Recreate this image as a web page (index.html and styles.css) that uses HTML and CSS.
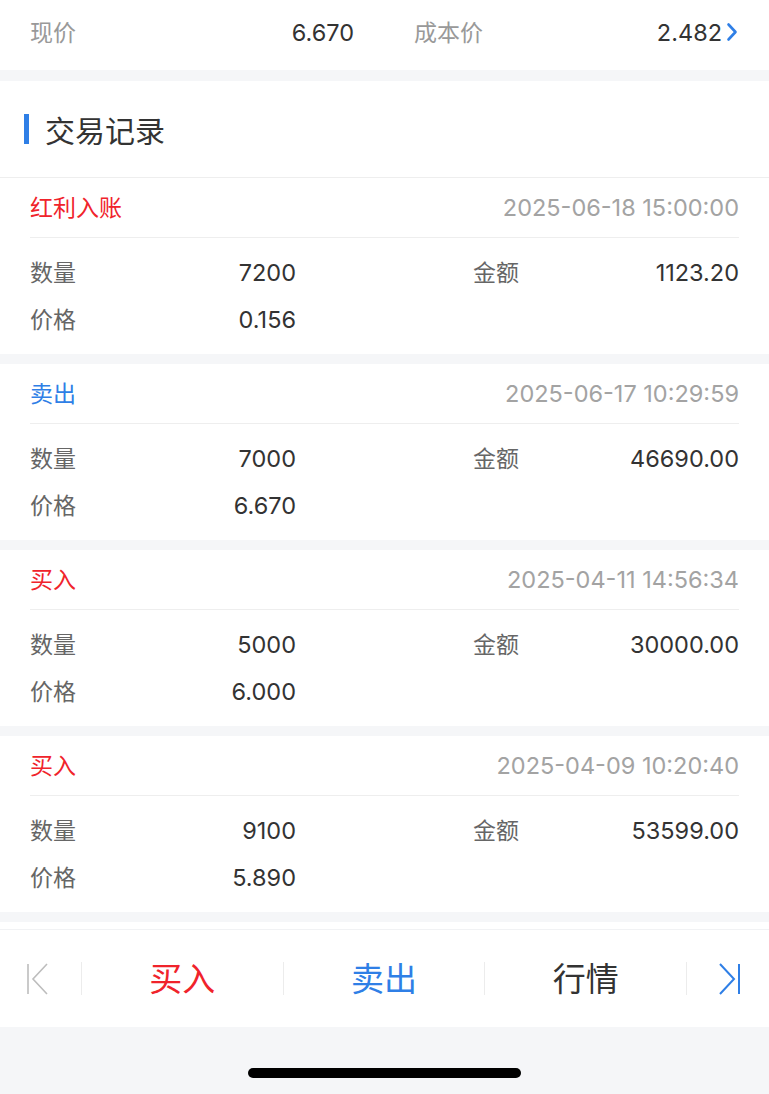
FILE: index.html
```html
<!DOCTYPE html>
<html lang="zh">
<head>
<meta charset="utf-8">
<title>交易记录</title>
<link rel="stylesheet" href="styles.css">
</head>
<body>
<div class="page">
  <div class="summary">
    <div class="pair">
      <span class="s-label">现价</span>
      <span class="s-value">6.670</span>
    </div>
    <div class="pair">
      <span class="s-label">成本价</span>
      <span class="s-value with-arrow">2.482
        <svg class="chev" width="12" height="20" viewBox="0 0 12 20"><path d="M2.5 2.5 L9.5 10 L2.5 17.5" fill="none" stroke="#2f7fe6" stroke-width="2.6" stroke-linecap="round" stroke-linejoin="round"/></svg>
      </span>
    </div>
  </div>

  <div class="section-head">
    <span class="bar"></span>
    <h2 class="title">交易记录</h2>
  </div>

  <div class="records">
    <div class="record">
      <div class="rec-head"><span class="type red">红利入账</span><span class="time">2025-06-18 15:00:00</span></div>
      <div class="rec-body">
        <div class="rec-row">
          <div class="cell"><span class="label">数量</span><span class="value">7200</span></div>
          <div class="cell"><span class="label">金额</span><span class="value">1123.20</span></div>
        </div>
        <div class="rec-row">
          <div class="cell"><span class="label">价格</span><span class="value">0.156</span></div>
        </div>
      </div>
    </div>

    <div class="record">
      <div class="rec-head"><span class="type blue">卖出</span><span class="time">2025-06-17 10:29:59</span></div>
      <div class="rec-body">
        <div class="rec-row">
          <div class="cell"><span class="label">数量</span><span class="value">7000</span></div>
          <div class="cell"><span class="label">金额</span><span class="value">46690.00</span></div>
        </div>
        <div class="rec-row">
          <div class="cell"><span class="label">价格</span><span class="value">6.670</span></div>
        </div>
      </div>
    </div>

    <div class="record">
      <div class="rec-head"><span class="type red">买入</span><span class="time">2025-04-11 14:56:34</span></div>
      <div class="rec-body">
        <div class="rec-row">
          <div class="cell"><span class="label">数量</span><span class="value">5000</span></div>
          <div class="cell"><span class="label">金额</span><span class="value">30000.00</span></div>
        </div>
        <div class="rec-row">
          <div class="cell"><span class="label">价格</span><span class="value">6.000</span></div>
        </div>
      </div>
    </div>

    <div class="record">
      <div class="rec-head"><span class="type red">买入</span><span class="time">2025-04-09 10:20:40</span></div>
      <div class="rec-body">
        <div class="rec-row">
          <div class="cell"><span class="label">数量</span><span class="value">9100</span></div>
          <div class="cell"><span class="label">金额</span><span class="value">53599.00</span></div>
        </div>
        <div class="rec-row">
          <div class="cell"><span class="label">价格</span><span class="value">5.890</span></div>
        </div>
      </div>
    </div>
  </div>

  <div class="spacer"></div>

  <nav class="tabbar">
    <div class="tab icon-tab">
      <svg width="24" height="32" viewBox="0 0 24 32"><path d="M2 1 V31" stroke="#bdbdbd" stroke-width="1.6" fill="none"/><path d="M21 1 L7 16 L21 31" stroke="#bdbdbd" stroke-width="1.6" fill="none" stroke-linejoin="miter"/></svg>
    </div>
    <div class="tab"><span class="tab-text red">买入</span></div>
    <div class="tab"><span class="tab-text blue">卖出</span></div>
    <div class="tab"><span class="tab-text dark">行情</span></div>
    <div class="tab icon-tab right">
      <svg width="24" height="32" viewBox="0 0 24 32"><path d="M3 1 L17 16 L3 31" stroke="#2f7fe6" stroke-width="2" fill="none"/><path d="M22 1 V31" stroke="#2f7fe6" stroke-width="2" fill="none"/></svg>
    </div>
  </nav>

  <div class="home"><span class="indicator"></span></div>
</div>
</body>
</html>
```

FILE: styles.css
```css
* { box-sizing: border-box; }
html, body { margin: 0; padding: 0; }
body {
  background: #f5f6f8;
  font-family: Inter, "Noto Sans CJK SC", sans-serif;
  color: #333;
}
.page { width: 769px; }

.summary {
  background: #fff;
  height: 70px;
  padding: 0 31px 6px 30px;
  display: flex;
  align-items: center;
  gap: 60px;
  margin-bottom: 11px;
}
.pair {
  flex: 1;
  display: flex;
  justify-content: space-between;
  align-items: center;
}
.s-label { font-size: 23px; color: #999; margin-bottom: 3px; }
.s-value { font-size: 23.5px; color: #333; display: flex; align-items: center; }
.chev { margin-left: 4px; }

.section-head {
  background: #fff;
  height: 97px;
  border-bottom: 1px solid #eeeeee;
  display: flex;
  align-items: center;
  padding-left: 24px;
}
.bar { width: 5px; height: 30px; background: #2f7fe6; margin-right: 16px; }
.title { margin: 0; font-size: 30px; font-weight: 400; color: #333; }

.record { background: #fff; margin-bottom: 10px; }
.rec-head {
  height: 60px;
  margin: 0 30px;
  display: flex;
  justify-content: space-between;
  align-items: center;
  border-bottom: 1px solid #eeeeee;
}
.type { font-size: 23px; margin-bottom: 3px; }
.red { color: #f0232b; }
.blue { color: #2f7fe6; }
.dark { color: #333; }
.time { font-size: 23.5px; color: #a3a3a3; }

.rec-body { padding: 11px 30px 11px; }
.rec-row {
  height: 47px;
  display: flex;
  justify-content: space-between;
  align-items: center;
}
.cell {
  width: 266px;
  display: flex;
  justify-content: space-between;
  align-items: center;
}
.label { font-size: 23px; color: #666; margin-bottom: 3px; }
.value { font-size: 23.5px; color: #333; }

.spacer { height: 7px; background: #fff; }

.tabbar {
  height: 98px;
  background: #fff;
  border-top: 1px solid #f1f2f4;
  display: grid;
  grid-template-columns: 82px 1fr 1fr 1fr 82px;
  align-items: center;
}
.tab {
  height: 33px;
  display: flex;
  align-items: center;
  justify-content: center;
  border-right: 1px solid #ececec;
}
.tab:last-child { border-right: none; }
.icon-tab { justify-content: flex-start; padding-left: 26px; }
.icon-tab.right { justify-content: flex-start; padding-left: 30px; }
.tab-text { font-size: 33px; margin-bottom: 4px; }

.home {
  height: 67px;
  background: #f5f6f8;
  display: flex;
  justify-content: center;
  align-items: flex-start;
  padding-top: 41px;
}
.indicator {
  width: 273px;
  height: 10px;
  border-radius: 5px;
  background: #000;
}
```
